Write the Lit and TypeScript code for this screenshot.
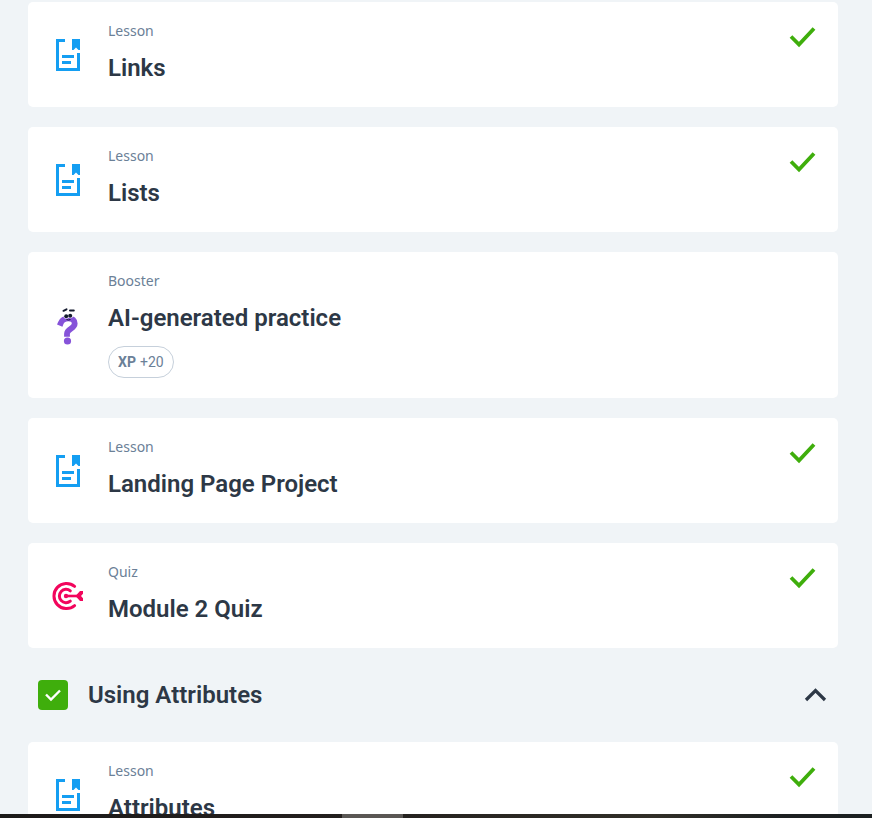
import { LitElement, html, css, svg, nothing } from "lit";
import { customElement, property, state } from "lit/decorators.js";

type Kind = "Lesson" | "Booster" | "Quiz";

interface Item {
  kind: Kind;
  title: string;
  done: boolean;
  xp?: number;
}

const currentModule: Item[] = [
  { kind: "Lesson", title: "Links", done: true },
  { kind: "Lesson", title: "Lists", done: true },
  { kind: "Booster", title: "AI-generated practice", done: false, xp: 20 },
  { kind: "Lesson", title: "Landing Page Project", done: true },
  { kind: "Quiz", title: "Module 2 Quiz", done: true },
];

const nextModule: Item[] = [{ kind: "Lesson", title: "Attributes", done: true }];

const glyphs = {
  Lesson: svg`
    <path d="M17 5.5H9.500V34.500H30.500V18" fill="none" stroke="#149ef2" stroke-width="3"/>
    <path d="M24 4h8v11h-1.500L28 12.500 25.500 15H24z" fill="#149ef2"/>
    <path d="M14 21.500h12M14 27.500h9" stroke="#149ef2" stroke-width="3"/>`,
  Booster: svg`
    <path d="M12.800 17C14 14 16.800 12.300 20.300 12.300c4.200 0 6.400 2.200 6.400 5.300 0 5.600-7.700 4.600-7.700 10.200" fill="none" stroke="#8653d9" stroke-width="5.800" stroke-linecap="square" stroke-linejoin="round"/>
    <circle cx="19.500" cy="35" r="3.600" fill="#8653d9"/>
    <path d="M15.500 4.800l3-1.500M22 4.500h3.800" stroke="#141a2e" stroke-width="2" stroke-linecap="round"/>
    <circle cx="18.300" cy="10" r="2.700" fill="#fff"/><circle cx="22.300" cy="9.600" r="2.700" fill="#fff"/>
    <circle cx="18.200" cy="10.300" r="2" fill="#141a2e"/><circle cx="22.200" cy="9.800" r="2" fill="#141a2e"/>
    <path d="M18.500 13.500q2 1 4 0" stroke="#141a2e" fill="none"/>`,
  Quiz: svg`
    <path d="M26.600 10.300A12.600 12.600 0 1 0 26.600 29.700" fill="none" stroke="#f2055c" stroke-width="3" stroke-linecap="round"/>
    <path d="M22.300 14.800A6.700 6.700 0 1 0 22.300 25.200" fill="none" stroke="#f2055c" stroke-width="3" stroke-linecap="round"/>
    <circle cx="18" cy="20" r="2.200" fill="#f2055c"/>
    <path d="M18 20h12" stroke="#f2055c" stroke-width="2.600"/>
    <path d="M27.500 20l4.500-5h3v2.800L33 20l2 2.200V25h-3z" fill="#f2055c"/>`,
};

@customElement("course-card")
export class CourseCard extends LitElement {
  @property({ attribute: false }) item!: Item;

  static styles = css`
    :host {
      display: block;
    }
    .card {
      display: flex;
      align-items: center;
      gap: 20px;
      min-height: 105px;
      padding: 17px 21px 20px 20px;
      box-sizing: border-box;
      border-radius: 5px;
      background: #fff;
      color: #2d3846;
      text-decoration: none;
    }
    .glyph {
      flex: none;
      width: 40px;
      height: 40px;
      margin-top: 4px;
    }
    .text {
      flex: 1;
      align-self: flex-start;
      min-width: 0;
    }
    .kind {
      font: 14px/24px "Noto Sans", sans-serif;
      color: #6b8097;
    }
    .title {
      margin: 9px 0 0;
      font: 600 24px/32px Roboto, sans-serif;
    }
    .xp {
      display: inline-flex;
      align-items: center;
      gap: 4px;
      height: 32px;
      margin-top: 12px;
      padding: 0 9px;
      box-sizing: border-box;
      border: 1px solid #c6d0db;
      border-radius: 16px;
      font: 14px/20px Roboto, sans-serif;
      color: #6b8097;
    }
    .check {
      flex: none;
      align-self: flex-start;
      width: 30px;
      height: 30px;
      margin-top: 2px;
    }
  `;

  render() {
    const { kind, title, done, xp } = this.item;
    return html`
      <a class="card" href="#">
        <svg class="glyph" viewBox="0 0 40 40" aria-hidden="true">${glyphs[kind]}</svg>
        <div class="text">
          <div class="kind">${kind}</div>
          <h3 class="title">${title}</h3>
          ${xp ? html`<span class="xp"><b>XP</b><span>+${xp}</span></span>` : nothing}
        </div>
        ${done
          ? html`<svg class="check" viewBox="0 0 30 30" role="img" aria-label="Completed">
              <path d="M4 15.500l8 8L27 7.500" fill="none" stroke="#3fae0c" stroke-width="3.800" />
            </svg>`
          : nothing}
      </a>
    `;
  }
}

@customElement("app-root")
export class AppRoot extends LitElement {
  @state() private open = true;

  static styles = css`
    :host {
      display: flex;
      flex-direction: column;
      height: 100vh;
      background: #f0f4f7;
      color: #2d3846;
    }
    .page {
      flex: 1;
      min-height: 0;
      overflow: hidden;
      padding: 2px 34px 0 28px;
    }
    .list {
      display: grid;
      gap: 20px;
    }
    .section {
      display: flex;
      align-items: center;
      height: 94px;
      padding: 0 10px;
    }
    .tick {
      display: grid;
      flex: none;
      width: 30px;
      height: 30px;
      margin-right: 20px;
    }
    .box,
    .mark {
      grid-area: 1 / 1;
      width: 30px;
      height: 30px;
    }
    .box {
      appearance: none;
      margin: 0;
      border-radius: 4px;
      background: #3fae0c;
    }
    .mark {
      pointer-events: none;
    }
    .name {
      flex: 1;
      margin: 0;
      font: 600 24px/32px Roboto, sans-serif;
    }
    .toggle {
      width: 26px;
      height: 26px;
      padding: 0;
      border: 0;
      background: none;
    }
    .arrow {
      display: block;
      width: 26px;
      height: 26px;
    }
    .closed {
      transform: rotate(180deg);
    }
    .taskbar {
      flex: none;
      display: grid;
      grid-template-columns: 342fr 61fr 469fr;
      height: 4px;
      background: linear-gradient(90deg, #1c1a19, #231f1d 40%, #312f28 75%, #1c2021 90%);
    }
    .active {
      grid-column: 2;
      background: #5a5754;
    }
  `;

  render() {
    return html`
      <main class="page">
        <div class="list">${currentModule.map((i) => html`<course-card .item=${i}></course-card>`)}</div>
        <div class="section">
          <span class="tick">
            <input class="box" type="checkbox" checked aria-labelledby="section-name" />
            <svg class="mark" viewBox="0 0 30 30" aria-hidden="true">
              <path d="M8 14.500l5 5 9-9" fill="none" stroke="#fff" stroke-width="2.400" />
            </svg>
          </span>
          <h2 class="name" id="section-name">Using Attributes</h2>
          <button class="toggle" aria-label="Toggle section" aria-expanded=${this.open} @click=${() => (this.open = !this.open)}>
            <svg class="arrow ${this.open ? "" : "closed"}" viewBox="0 0 26 26" aria-hidden="true">
              <path d="M4 18l9.500-9.500 9.500 9.500" fill="none" stroke="#2d3846" stroke-width="3.200" />
            </svg>
          </button>
        </div>
        ${this.open
          ? html`<div class="list">${nextModule.map((i) => html`<course-card .item=${i}></course-card>`)}</div>`
          : nothing}
      </main>
      <div class="taskbar"><span class="active"></span></div>
    `;
  }
}
